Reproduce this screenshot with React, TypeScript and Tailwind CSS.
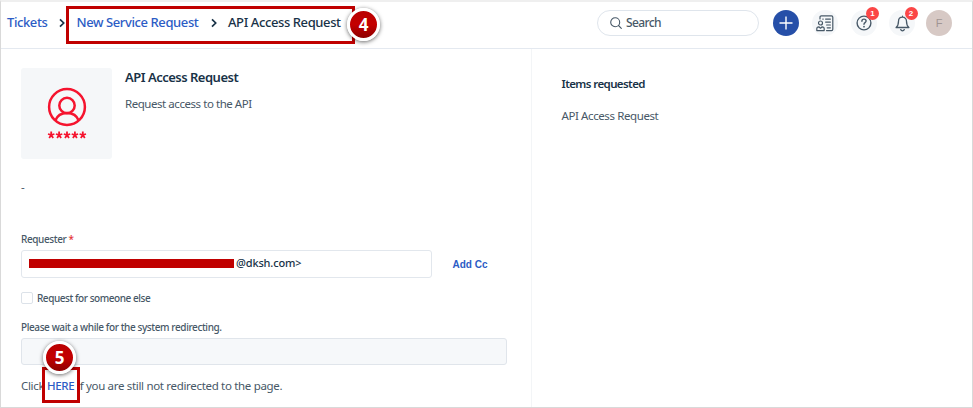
import React from "react";

function Marker({ n, className }: { n: string; className: string }) {
  return (
    <div
      className={`absolute flex h-[33px] w-[33px] items-center justify-center rounded-full border-[3px] border-white bg-gradient-to-b from-[#b90000] via-[#c40000] to-[#8e0000] font-['Open_Sans',sans-serif] text-[17px] font-bold text-white shadow-[0_1px_4px_rgba(0,0,0,0.6)] ${className}`}
    >
      {n}
    </div>
  );
}

function Chevron() {
  return (
    <svg width="6" height="10" viewBox="0 0 6 10" fill="none" stroke="#183247" strokeWidth="1.7">
      <path d="M1 1.3 4.7 5 1 8.7" />
    </svg>
  );
}

function CatalogIcon() {
  return (
    <svg width="18" height="17" viewBox="0 0 18 17" fill="none" stroke="#475867" strokeWidth="1.2" strokeLinecap="round" strokeLinejoin="round">
      <path d="M4 4V2.2C4 1.4 4.6.9 5.3.9h10.2c.8 0 1.3.5 1.3 1.3v12.1c0 .8-.5 1.3-1.3 1.3H10.5" />
      <path d="M6.800 4.100h.4M9.600 4.100h4.800M9.600 7.100h4.800M10.600 10h3.800M11.200 12.800h3.200" />
      <circle cx="4.500" cy="8" r="2" />
      <path d="M.8 15.600v-1.800c0-1.200.9-2 2-2l1.700 1.400 1.700-1.400c1.100 0 2 .8 2 2v1.800Z" />
    </svg>
  );
}

function HelpIcon() {
  return (
    <svg width="16" height="16" viewBox="0 0 16 16" fill="none" stroke="#475867" strokeWidth="1.4" strokeLinecap="round">
      <circle cx="8" cy="8" r="6.900" />
      <path d="M5.900 6.200c0-1.300 1-2.100 2.100-2.100s2.100.8 2.100 2c0 1.500-2.100 1.600-2.100 3.100" />
      <path d="M8 11.600v.1" strokeWidth="1.7" />
    </svg>
  );
}

function BellIcon() {
  return (
    <svg width="15" height="17" viewBox="0 0 15 17" fill="none" stroke="#475867" strokeWidth="1.3" strokeLinecap="round" strokeLinejoin="round">
      <path d="M7.500 1.200v1M7.500 2.200c-2.400 0-4 1.800-4 4.100 0 3.500-.8 5-2.400 6.200h12.800c-1.600-1.200-2.400-2.700-2.400-6.200 0-2.300-1.600-4.100-4-4.100Z" />
      <path d="M5.700 14.600c.3.8 1 1.200 1.800 1.200s1.500-.4 1.800-1.200" />
    </svg>
  );
}

function UserPasswordIcon() {
  return (
    <svg width="40" height="52" viewBox="0 0 40 52" fill="none" stroke="#f5142f" strokeWidth="2.5">
      <circle cx="20" cy="20" r="17.900" />
      <circle cx="20" cy="18.500" r="7.700" />
      <path d="M8.300 33.500c1.800-4.900 6.300-7.600 11.700-7.600s9.900 2.700 11.700 7.600" />
      {[4.2, 12.1, 20, 27.9, 35.8].map((x) => (
        <path
          key={x}
          strokeWidth="1.8"
          d={`M${x} 44.500v3.600M${x} 48l-3.200-1M${x} 48l3.200-1M${x} 48l-2 2.900M${x} 48l2 2.900`}
        />
      ))}
    </svg>
  );
}

function RoundButton({ badge, children }: { badge?: string; children: React.ReactNode }) {
  return (
    <div className="relative flex h-[26px] w-[26px] items-center justify-center rounded-full bg-[#f5f7f9]">
      {children}
      {badge && (
        <span className="absolute -top-[3px] left-[15.500px] flex h-[13px] w-[13px] items-center justify-center rounded-full bg-[#fb4646] font-['Liberation_Sans',sans-serif] text-[8px] font-bold text-white">
          {badge}
        </span>
      )}
    </div>
  );
}

export default function App() {
  return (
    <div className="relative h-[408px] w-[973px] overflow-hidden bg-white font-['Noto_Sans','Open_Sans',sans-serif] text-[11.5px] whitespace-nowrap text-[#475867]">
      <div className="flex h-full flex-col border border-t-2 border-[#d9d9d9] border-t-[#efefef]">
        <header className="flex h-[47px] shrink-0 items-center border-b border-[#e4e9f0] pr-[20px] pb-[4px] pl-[6px] text-[13px] font-medium">
          <nav className="flex items-center tracking-[-0.4px] text-[#2c5cc5]">
            <span className="w-[52px]">Tickets</span>
            <span className="w-[17.500px]"><Chevron /></span>
            <span className="w-[134px]">New Service Request</span>
            <span className="w-[17.500px]"><Chevron /></span>
            <span className="text-[#183247]">API Access Request</span>
          </nav>
          <div className="mr-[0.500px] ml-auto flex h-[26px] w-[162px] items-center rounded-full border border-[#dfe5ec] pl-[12px] text-[12px]">
            <svg width="12" height="12" viewBox="0 0 12 12" fill="none" stroke="#475867" strokeWidth="1.1" strokeLinecap="round">
              <circle cx="5.200" cy="5.200" r="4.500" />
              <path d="m8.500 8.500 2.800 2.800" />
            </svg>
            <span className="ml-[4.500px] tracking-[-0.6px]">Search</span>
          </div>
          <div className="ml-[14px] flex h-[26px] w-[26px] items-center justify-center rounded-full bg-[#264fa8]">
            <svg width="14" height="14" viewBox="0 0 14 14" stroke="white" strokeWidth="1.4">
              <path d="M7 .5v13M.5 7h13" />
            </svg>
          </div>
          <div className="ml-[13px] flex gap-[12.500px]">
            <RoundButton><CatalogIcon /></RoundButton>
            <RoundButton badge="1"><HelpIcon /></RoundButton>
            <RoundButton badge="2"><BellIcon /></RoundButton>
          </div>
          <div className="ml-[11px] flex h-[26px] w-[26px] items-center justify-center rounded-full bg-[#d7c9c5] font-['Liberation_Sans',sans-serif] text-[11px] text-[#a09593]">
            F
          </div>
        </header>

        <main className="flex grow">
          <section className="flex w-[531px] flex-col border-r border-[#f3f5f7] pt-[19px] pl-[20px]">
            <div className="flex h-[91px]">
              <div className="flex h-[91px] w-[91px] justify-center rounded-[3px] bg-[#f5f7f9] pt-[19px]">
                <UserPasswordIcon />
              </div>
              <div className="ml-[13px]">
                <h1 className="text-[13px] leading-[18px] font-semibold tracking-[-0.5px] text-[#183247]">API Access Request</h1>
                <p className="mt-[9px] leading-[18px] tracking-[-0.450px]">Request access to the API</p>
              </div>
            </div>
            <div className="mt-[19px] h-[18px] leading-[18px]">-</div>
            <label className="mt-[35px] h-[16px] text-[10px] leading-[16px] font-medium tracking-[-0.4px]">
              Requester <span className="text-[#e43538]">*</span>
            </label>
            <div className="mt-[3px] flex items-center">
              <div className="flex h-[28px] w-[411px] items-center rounded-[3px] border border-[#e2e7ed] pb-[2px] pl-[7px] text-[11px] font-medium text-[#183247]">
                <span className="h-[9px] w-[205px] bg-[#c00000]" />
                <span className="ml-[2px] pt-px tracking-[-0.150px]">@dksh.com&gt;</span>
              </div>
              <span className="ml-[20.500px] font-['Liberation_Sans',sans-serif] text-[10px] font-bold text-[#2c5cc5]">Add Cc</span>
            </div>
            <div className="mt-[12px] flex h-[16px] items-center text-[10px] font-medium">
              <span className="h-[12px] w-[12px] rounded-[2px] border border-[#dce2e9]" />
              <span className="ml-[4px] tracking-[-0.450px]">Request for someone else</span>
            </div>
            <div className="mt-[13px] h-[16px] text-[10px] leading-[16px] font-medium tracking-[-0.400px]">
              Please wait a while for the system redirecting.
            </div>
            <div className="mt-[3px] h-[27px] w-[485.500px] rounded-[3px] border border-[#e0e5eb] bg-[#f6f8fa]" />
            <p className="mt-[12px] leading-[18px] tracking-[-0.320px]">
              Click <span className="font-medium text-[#2c5cc5]">HERE</span> if you are still not redirected to the page.
            </p>
          </section>
          <aside className="pt-[26px] pl-[29.500px]">
            <h2 className="leading-[18px] font-semibold tracking-[-0.600px] text-[#183247]">Items requested</h2>
            <p className="mt-[14px] leading-[18px] tracking-[-0.400px]">API Access Request</p>
          </aside>
        </main>
      </div>

      <div className="absolute top-[6px] left-[66px] h-[38px] w-[289px] border-[3px] border-[#c00000]" />
      <Marker n="4" className="top-[8px] left-[347px]" />
      <div className="absolute top-[367px] left-[42px] h-[36px] w-[38px] border-[3px] border-[#c00000]" />
      <Marker n="5" className="top-[341px] left-[43px]" />
    </div>
  );
}
